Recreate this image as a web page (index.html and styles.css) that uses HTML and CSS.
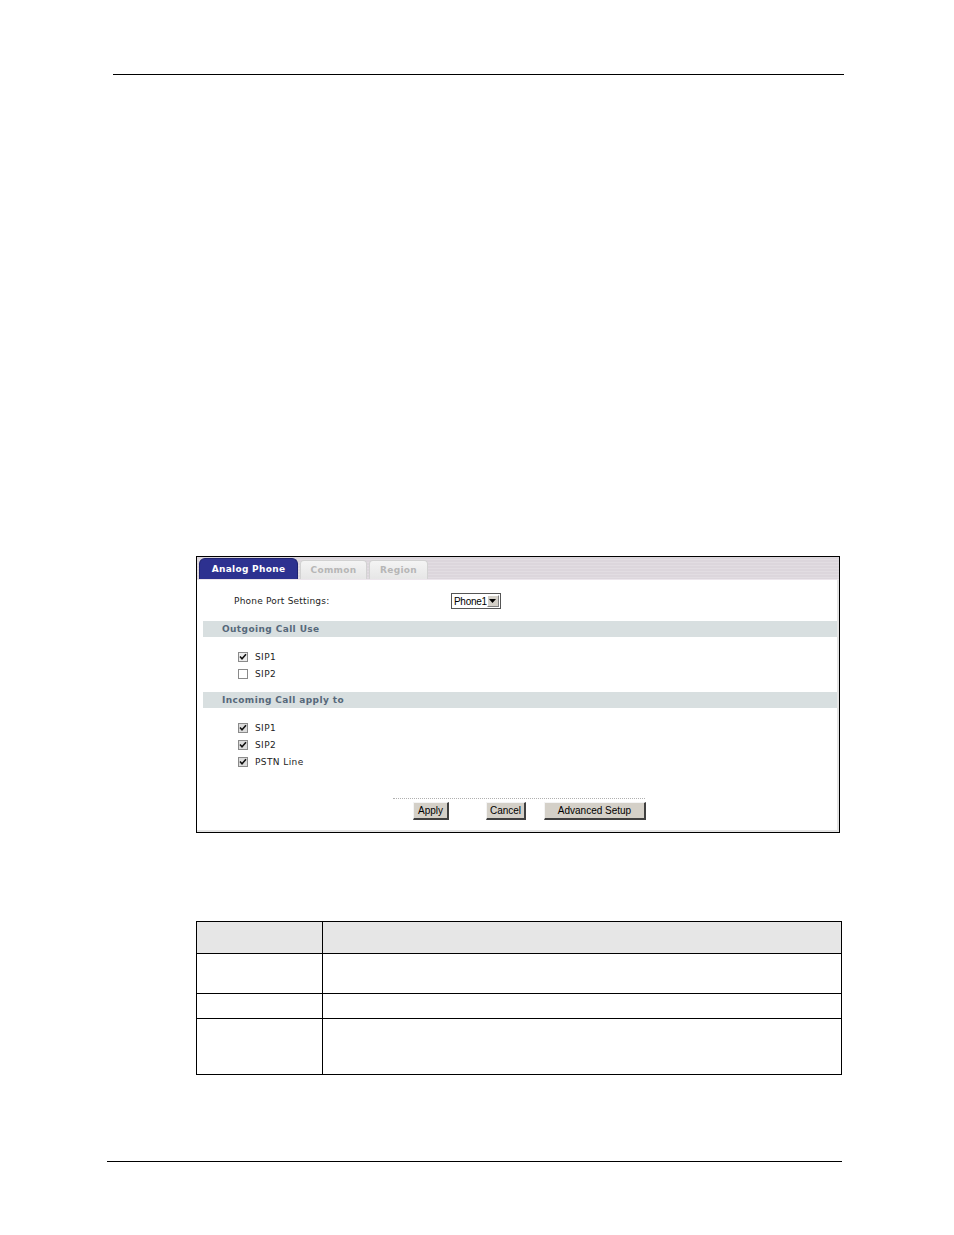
FILE: index.html
```html
<!DOCTYPE html>
<html>
<head>
<meta charset="utf-8">
<link rel="stylesheet" href="styles.css">
</head>
<body>
<div class="page">
  <div class="rule-top"></div>

  <div class="shot">
    <div class="tabbar">
      <div class="tab active">Analog Phone</div>
      <div class="tab">Common</div>
      <div class="tab">Region</div>
    </div>
    <div class="content">
      <div class="port-row">
        <span class="port-label">Phone Port Settings:</span>
        <span class="select"><span class="sel-text">Phone1</span><span class="sel-btn"><svg width="7" height="4" viewBox="0 0 7 4"><path d="M0 0h7L3.5 4z" fill="#000"/></svg></span></span>
      </div>
      <div class="section">Outgoing Call Use</div>
      <div class="checks">
        <div class="check"><span class="box"><svg width="10" height="10" viewBox="0 0 10 10"><rect x="0.5" y="0.5" width="9" height="9" fill="#ececec" stroke="#8a8a8a"/><path d="M2 4.5l2 2.2 4-4.4" fill="none" stroke="#111" stroke-width="1.6"/></svg></span>SIP1</div>
        <div class="check"><span class="box"><svg width="10" height="10" viewBox="0 0 10 10"><rect x="0.5" y="0.5" width="9" height="9" fill="#fff" stroke="#8a8a8a"/></svg></span>SIP2</div>
      </div>
      <div class="section second">Incoming Call apply to</div>
      <div class="checks">
        <div class="check"><span class="box"><svg width="10" height="10" viewBox="0 0 10 10"><rect x="0.5" y="0.5" width="9" height="9" fill="#dcdcdc" stroke="#8a8a8a"/><path d="M2 4.5l2 2.2 4-4.4" fill="none" stroke="#111" stroke-width="1.6"/></svg></span>SIP1</div>
        <div class="check"><span class="box"><svg width="10" height="10" viewBox="0 0 10 10"><rect x="0.5" y="0.5" width="9" height="9" fill="#dcdcdc" stroke="#8a8a8a"/><path d="M2 4.5l2 2.2 4-4.4" fill="none" stroke="#111" stroke-width="1.6"/></svg></span>SIP2</div>
        <div class="check"><span class="box"><svg width="10" height="10" viewBox="0 0 10 10"><rect x="0.5" y="0.5" width="9" height="9" fill="#dcdcdc" stroke="#8a8a8a"/><path d="M2 4.5l2 2.2 4-4.4" fill="none" stroke="#111" stroke-width="1.6"/></svg></span>PSTN Line</div>
      </div>
      <div class="dots"></div>
      <div class="buttons">
        <span class="btn btn-apply">Apply</span>
        <span class="btn btn-cancel">Cancel</span>
        <span class="btn btn-adv">Advanced Setup</span>
      </div>
    </div>
  </div>

  <table class="desc">
    <tr class="head"><td class="c1"></td><td></td></tr>
    <tr class="r1"><td class="c1"></td><td></td></tr>
    <tr class="r2"><td class="c1"></td><td></td></tr>
    <tr class="r3"><td class="c1"></td><td></td></tr>
  </table>

  <div class="rule-bottom"></div>
</div>
</body>
</html>
```

FILE: styles.css
```css
html, body {
  margin: 0;
  padding: 0;
  background: #fff;
}
.page {
  width: 954px;
  height: 1235px;
  display: flex;
  flex-direction: column;
  font-family: "DejaVu Sans", Verdana, sans-serif;
}
.rule-top {
  margin: 74px 0 0 113px;
  width: 731px;
  height: 1px;
  background: #000;
}
.shot {
  margin: 481px 0 0 196px;
  width: 642px;
  height: 275px;
  border: 1px solid #000;
  display: flex;
  flex-direction: column;
  overflow: hidden;
}
.tabbar {
  height: 22px;
  flex: none;
  display: flex;
  align-items: flex-end;
  padding-left: 2px;
  gap: 2px;
  background: repeating-linear-gradient(to bottom, #dcd6dc 0, #dcd6dc 2px, #e2dde2 2px, #e2dde2 3px);
  border-bottom: 1px solid #ece6ec;
}
.tab {
  height: 19px;
  box-sizing: border-box;
  display: flex;
  align-items: center;
  justify-content: center;
  font-size: 9px;
  font-weight: bold;
  letter-spacing: 0.3px;
  color: #b6b6b6;
  background: linear-gradient(to bottom, #f4f4f4, #e6e6e6);
  border: 1px solid #d2d2d2;
  border-bottom: none;
  border-radius: 4px 4px 0 0;
  width: 67px;
}
.tab:nth-child(3) { width: 59px; }
.tab.active {
  width: 99px;
  height: 21px;
  color: #fff;
  background: #2d3190;
  border: 1px solid #1e2270;
  border-bottom: none;
  border-radius: 6px 6px 0 0;
}
.content {
  flex: 1;
  display: flex;
  flex-direction: column;
  padding-left: 6px;
  border-right: 2px solid #e4e4e4;
  border-bottom: 2px solid #e4e4e4;
}
.port-row {
  margin-top: 13px;
  height: 16px;
  display: flex;
  align-items: center;
  font-size: 9px;
  color: #222;
  letter-spacing: 0.2px;
}
.port-label {
  margin-left: 31px;
  width: 217px;
}
.select {
  width: 50px;
  height: 16px;
  box-sizing: border-box;
  border: 1px solid #555;
  background: #fff;
  display: flex;
  align-items: center;
  font-family: "Liberation Sans", Arial, sans-serif;
  font-size: 10px;
  letter-spacing: -0.3px;
  color: #000;
}
.sel-text {
  flex: 1;
  padding-left: 2px;
}
.sel-btn {
  width: 13px;
  height: 12px;
  margin-right: 1px;
  background: #d4d0c8;
  border-top: 1px solid #fff;
  border-left: 1px solid #fff;
  border-right: 1px solid #808080;
  border-bottom: 1px solid #808080;
  box-sizing: border-box;
  display: flex;
  align-items: center;
  justify-content: center;
}
.section {
  margin-top: 12px;
  height: 16px;
  background: #d8dfe0;
  display: flex;
  align-items: center;
  padding-left: 19px;
  font-size: 9px;
  font-weight: bold;
  color: #56687a;
  letter-spacing: 0.4px;
}
.section.second { margin-top: 10px; }
.checks {
  margin-top: 11px;
  display: flex;
  flex-direction: column;
  margin-left: 35px;
}
.check {
  height: 17px;
  display: flex;
  align-items: center;
  font-size: 9px;
  color: #222;
  letter-spacing: 0.4px;
}
.box {
  width: 10px;
  height: 10px;
  margin-right: 7px;
  display: flex;
}
.dots {
  margin-top: 28px;
  margin-left: 190px;
  width: 252px;
  height: 0;
  border-top: 1px dotted #b0b0b0;
}
.buttons {
  margin-top: 3px;
  display: flex;
  margin-left: 210px;
}
.btn {
  height: 18px;
  box-sizing: border-box;
  background: #d4d0c8;
  border-top: 1px solid #f4f4f4;
  border-left: 1px solid #f4f4f4;
  border-right: 2px solid #404040;
  border-bottom: 2px solid #404040;
  display: flex;
  align-items: center;
  justify-content: center;
  font-family: "Liberation Sans", Arial, sans-serif;
  font-size: 10px;
  color: #000;
}
.btn-apply { width: 36px; }
.btn-cancel { width: 40px; margin-left: 37px; }
.btn-adv { width: 102px; margin-left: 18px; }
.desc {
  margin: 88px 0 0 196px;
  width: 646px;
  border-collapse: collapse;
}
.desc td {
  border: 1px solid #000;
  padding: 0;
}
.desc .c1 { width: 125px; }
.desc .head td { height: 31px; background: #e6e6e6; }
.desc .r1 td { height: 39px; }
.desc .r2 td { height: 24px; }
.desc .r3 td { height: 55px; }
.rule-bottom {
  margin: 86px 0 0 107px;
  width: 735px;
  height: 1px;
  background: #000;
}
```
